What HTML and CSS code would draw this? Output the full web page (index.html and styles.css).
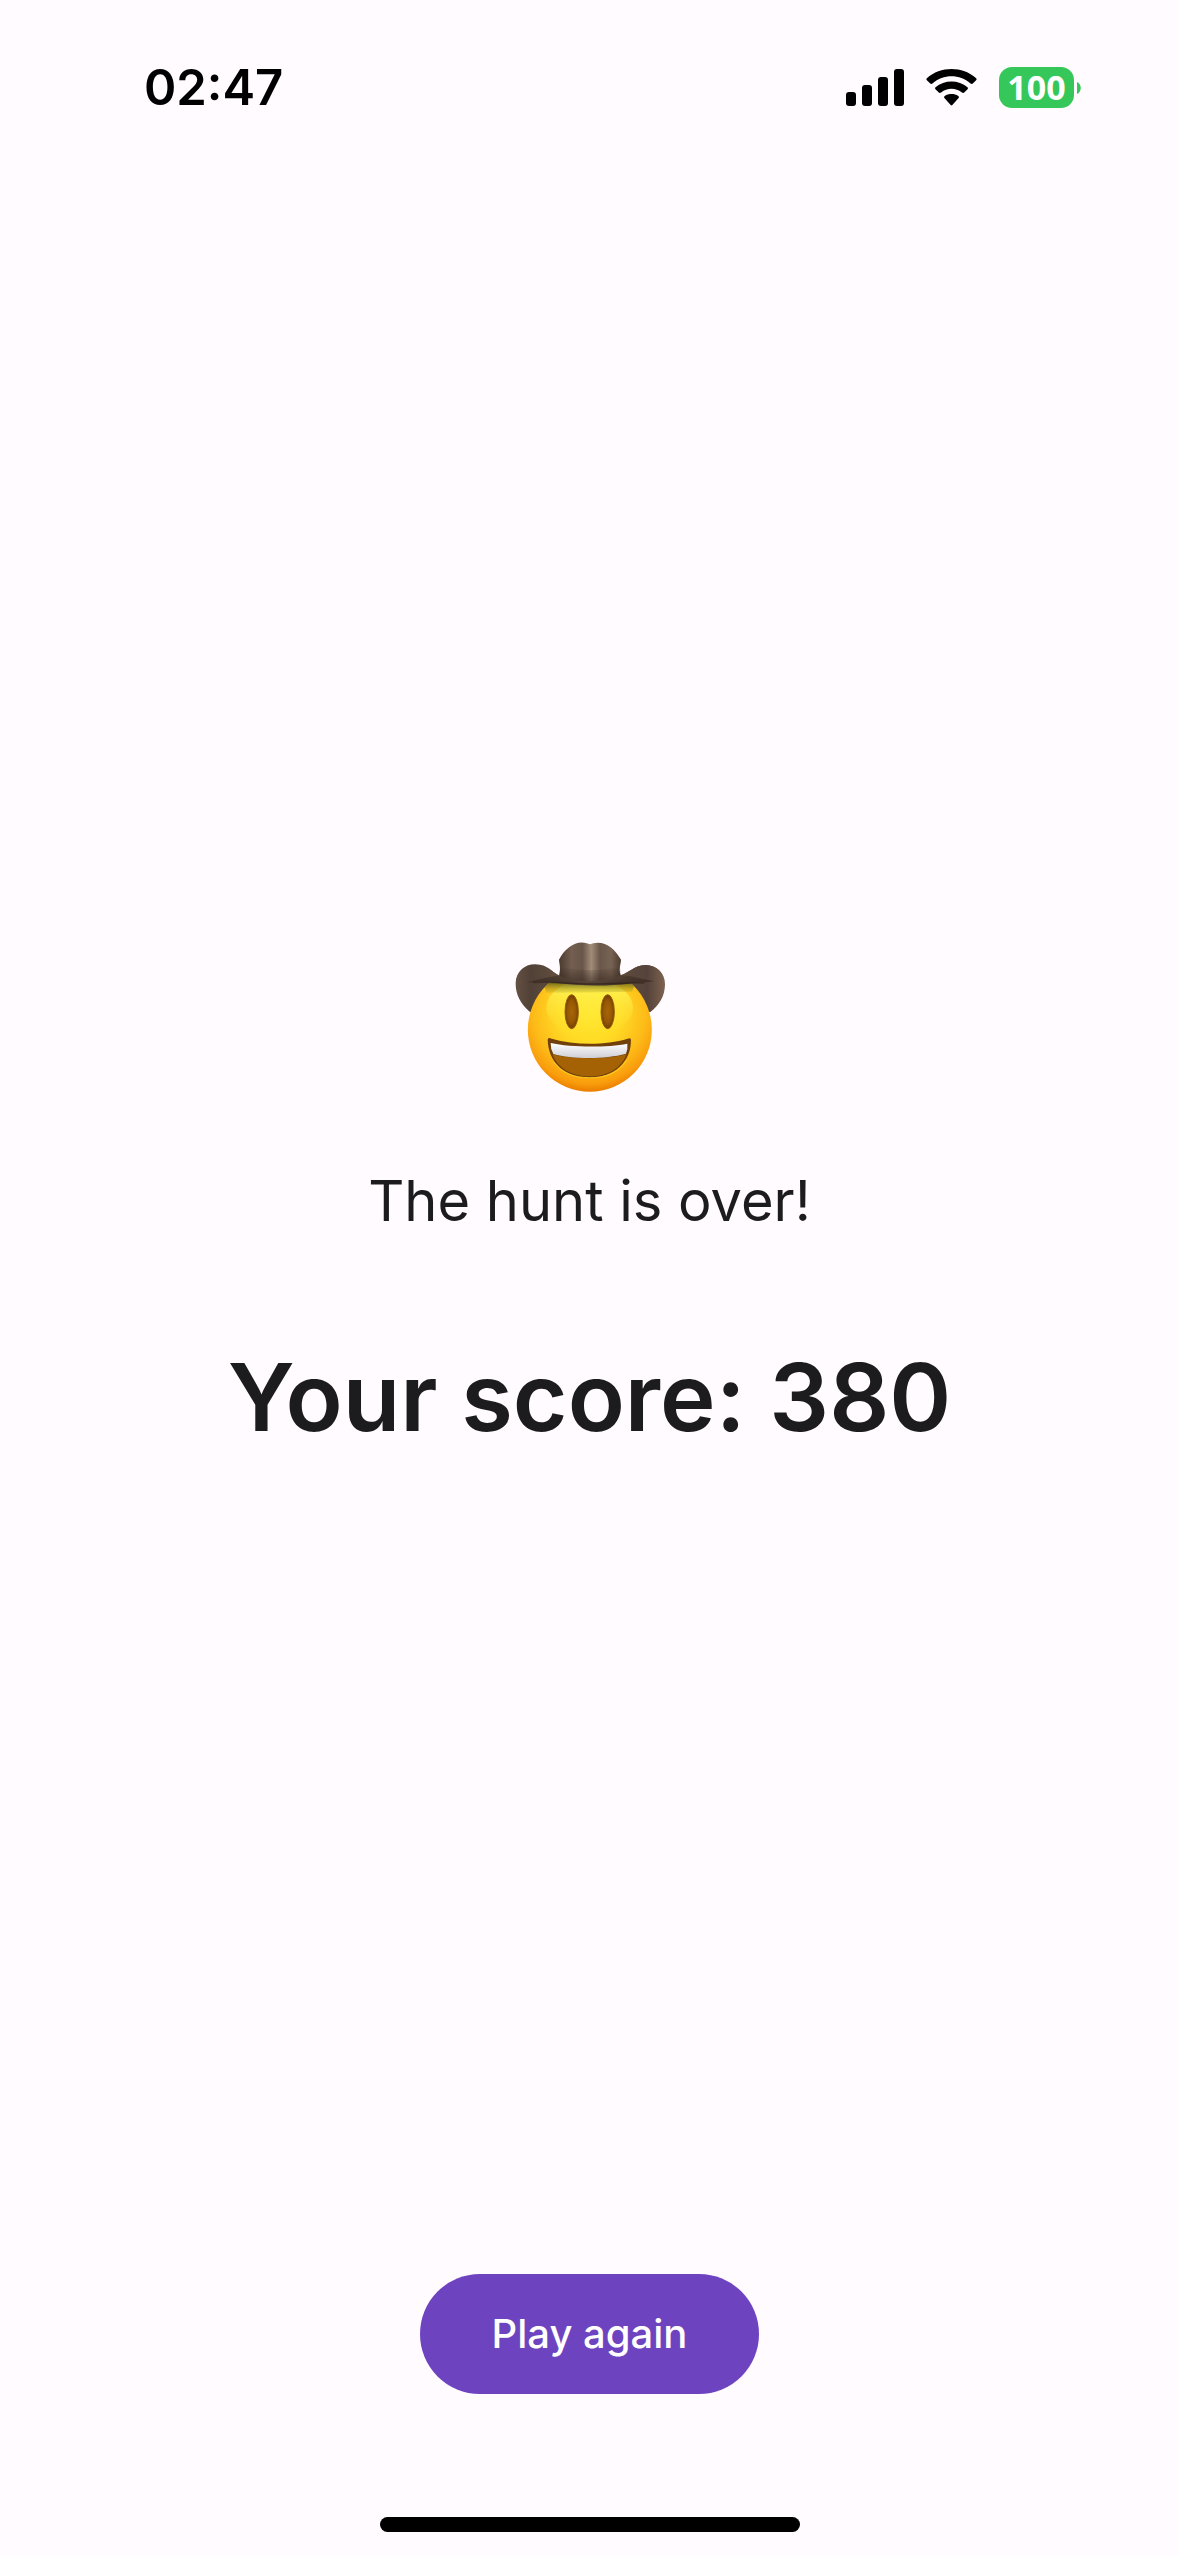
FILE: index.html
```html
<!DOCTYPE html>
<html lang="en">
<head>
<meta charset="utf-8">
<meta name="viewport" content="width=device-width, initial-scale=1">
<title>The hunt is over!</title>
<link rel="stylesheet" href="styles.css">
</head>
<body>
<header class="status-bar">
  <time class="clock">02:47</time>
  <div class="indicators">
    <svg class="signal" viewBox="0 0 58 37" aria-hidden="true">
      <rect x="0" y="23" width="10" height="14" rx="3"/>
      <rect x="16" y="16" width="10" height="21" rx="3"/>
      <rect x="32" y="8" width="10" height="29" rx="3"/>
      <rect x="48" y="0" width="10" height="37" rx="3"/>
    </svg>
    <svg class="wifi" viewBox="0 0 153 112" aria-hidden="true">
      <path d="M2 34 Q-1 31 2 28 C43-9 110-9 151 28 Q154 31 151 34 L141 44 Q138 47 134 44 C101 15 52 15 19 44 Q15 47 12 44Z"/>
      <path d="M28 61 Q25 58 28 55 C55 32 98 32 125 55 Q128 58 125 61 L115 71 Q112 74 108 71 C89 56 64 56 45 71 Q41 74 38 71Z"/>
      <path d="M55 88 Q52 85 56 82 C68 74 85 74 97 82 Q101 85 98 88 L79 109 Q76.500 112 74 109Z"/>
    </svg>
    <div class="battery">
      <span class="battery-level">100</span>
      <svg class="battery-cap" viewBox="0 0 4 12" aria-hidden="true"><path d="M0 0C5 2 5 10 0 12Z"/></svg>
    </div>
  </div>
</header>
<main class="result">
  <svg class="cowboy" viewBox="46 38 450 450" role="img" aria-label="Smiling cowboy">
    <defs>
      <radialGradient id="skin" gradientUnits="userSpaceOnUse" cx="270" cy="250" r="235">
        <stop offset="0" stop-color="#ffe72e"/><stop offset=".4" stop-color="#ffda25"/><stop offset=".72" stop-color="#fdbb18"/><stop offset=".91" stop-color="#f99c0c"/><stop offset="1" stop-color="#ec8000"/>
      </radialGradient>
      <linearGradient id="shine" x1="0" y1="0" x2="0" y2="1">
        <stop offset="0" stop-color="#fffa63" stop-opacity=".9"/><stop offset="1" stop-color="#ffe52e" stop-opacity="0"/>
      </linearGradient>
      <linearGradient id="brim" gradientUnits="userSpaceOnUse" x1="48" y1="0" x2="496" y2="0">
        <stop offset="0" stop-color="#655044"/><stop offset=".1" stop-color="#514136"/><stop offset=".28" stop-color="#614e40"/><stop offset=".5" stop-color="#8b7765"/><stop offset=".75" stop-color="#5c493c"/><stop offset=".88" stop-color="#55423a"/><stop offset="1" stop-color="#7d6350"/>
      </linearGradient>
      <linearGradient id="crown" x1="0" y1="0" x2="1" y2="0">
        <stop offset="0" stop-color="#4b3b31"/><stop offset=".2" stop-color="#735e50"/><stop offset=".38" stop-color="#69564a"/><stop offset=".52" stop-color="#a18b79"/><stop offset=".66" stop-color="#6b574a"/><stop offset=".84" stop-color="#776354"/><stop offset="1" stop-color="#4c3b30"/>
      </linearGradient>
      <linearGradient id="shade" x1="0" y1="0" x2="0" y2="1">
        <stop offset="0" stop-color="#2c1d15" stop-opacity="0"/><stop offset="1" stop-color="#2c1d15" stop-opacity=".65"/>
      </linearGradient>
      <linearGradient id="shadow" x1="0" y1="0" x2="0" y2="1">
        <stop offset="0" stop-color="#58551a"/><stop offset="1" stop-color="#b2a323" stop-opacity=".25"/>
      </linearGradient>
      <linearGradient id="teeth" x1="0" y1="0" x2="0" y2="1">
        <stop offset="0" stop-color="#ffffff"/><stop offset="1" stop-color="#cfced5"/>
      </linearGradient>
      <radialGradient id="eye"><stop offset="0" stop-color="#a76607"/><stop offset=".65" stop-color="#965704"/><stop offset="1" stop-color="#6f3e04"/></radialGradient>
      <clipPath id="face"><circle cx="270.500" cy="301" r="186"/></clipPath>
    </defs>
    <path fill="url(#brim)" d="M91 248C60 222 47 192 48 160C50 126 75 104 108 105C145 106 154 127 180 139L363 138C394 126 403 109 437 107C471 107 496 132 496 164C496 200 480 226 452 248L380 250H160Z"/>
    <circle cx="270.500" cy="301" r="186" fill="url(#skin)"/>
    <ellipse cx="270" cy="235" rx="130" ry="85" fill="url(#shine)"/>
    <g clip-path="url(#face)">
      <path fill="url(#shadow)" d="M130 155H410L397 187Q270 190 140 190Z"/>
    </g>
    <path fill="url(#brim)" d="M60 135C72 112 105 102 134 112C153 120 165 133 180 139L363 138C391 130 402 109 437 107C465 107 484 122 491 144C470 157 430 160 391 162C325 171 240 170 171 161C126 156 100 158 78 161Z"/>
    <path fill="url(#crown)" d="M178 138C185 118 178 100 178 91C197 54 231 32 261 42Q271 47 281 42C316 34 345 58 364 91C364 103 356 119 363 138C335 158 220 164 178 138Z"/>
    <path fill="url(#shade)" d="M179 110C225 126 316 126 362 110L363 138C400 138 430 152 465 156C430 160 420 158 390 163C325 171 245 170 171 161C130 155 105 158 78 161L100 154C136 146 155 141 179 138Z"/>
    <path d="M100 160C150 155 195 163 270 164C330 164 388 159 434 161" fill="none" stroke="#281a14" stroke-width="4" stroke-opacity=".5"/>
    <g fill="url(#eye)" stroke="#985e09" stroke-width="3">
      <ellipse cx="216" cy="247" rx="20" ry="51"/>
      <ellipse cx="324" cy="247" rx="20" ry="51"/>
    </g>
    <path fill="#71400a" d="M144 331C145 325 149 325 156 328C225 348 318 348 384 328Q394 324 394 332C394 398 344 445 270 445C196 445 146 400 144 331Z"/>
    <path fill="#a46205" d="M158 374C200 390 336 391 381 374C365 417 325 441 270 441C214 441 174 417 158 374Z"/>
    <path fill="url(#teeth)" d="M153 341C215 355 323 355 383 343Q385 358 379 373C317 390 219 390 161 374Q152 358 153 341Z"/>
    <path d="M162 398C187 430 220 445 270 445C322 445 356 430 380 393" fill="none" stroke="#ffdc27" stroke-width="3" stroke-opacity=".8"/>
  </svg>
  <p class="message">The hunt is over!</p>
  <h1 class="score">Your score: 380</h1>
</main>
<footer class="actions">
  <button class="play-again" type="button">Play again</button>
  <div class="home-indicator"></div>
</footer>
</body>
</html>
```
FILE: styles.css
```css
* {
  box-sizing: border-box;
}

body {
  margin: 0;
  min-height: 100vh;
  display: flex;
  flex-direction: column;
  background: #fffbff;
  color: #1c1b1e;
  font-family: Inter, "Liberation Sans", sans-serif;
}

.status-bar {
  display: flex;
  justify-content: space-between;
  align-items: center;
  height: 175px;
  padding: 0 98px 0 144px;
  color: #000;
}

.clock {
  font-size: 49px;
  line-height: 60px;
  font-weight: 600;
}

.indicators {
  display: flex;
  align-items: center;
  gap: 22px;
}

.signal {
  width: 58px;
  height: 37px;
}

.wifi {
  width: 51px;
  height: 37px;
}

.battery {
  display: flex;
  align-items: center;
  gap: 3px;
}

.battery-level {
  width: 75px;
  border-radius: 13px;
  background: #35c759;
  color: #fff;
  font-family: "Open Sans", sans-serif;
  font-size: 34px;
  line-height: 41px;
  font-weight: 700;
  text-align: center;
}

.battery-cap {
  width: 4px;
  height: 12px;
  fill: #35c759;
}

.result {
  flex: 1;
  display: flex;
  flex-direction: column;
  align-items: center;
  justify-content: center;
  padding-bottom: 50px;
  text-align: center;
}

.cowboy {
  width: 150px;
  height: 150px;
}

.message {
  margin: 69px 0 96px;
  font-size: 56px;
  line-height: 80px;
}

.score {
  margin: 0;
  font-size: 94px;
  line-height: 120px;
  font-weight: 600;
}

.actions {
  display: flex;
  flex-direction: column;
  align-items: center;
  gap: 123px;
  padding-bottom: 24px;
}

.play-again {
  height: 120px;
  padding: 0 72px;
  border: 0;
  border-radius: 60px;
  background: #6e43bf;
  color: #fff;
  font: 500 40px/48px Inter, "Liberation Sans", sans-serif;
}

.home-indicator {
  width: 420px;
  height: 15px;
  border-radius: 8px;
  background: #000;
}
```
